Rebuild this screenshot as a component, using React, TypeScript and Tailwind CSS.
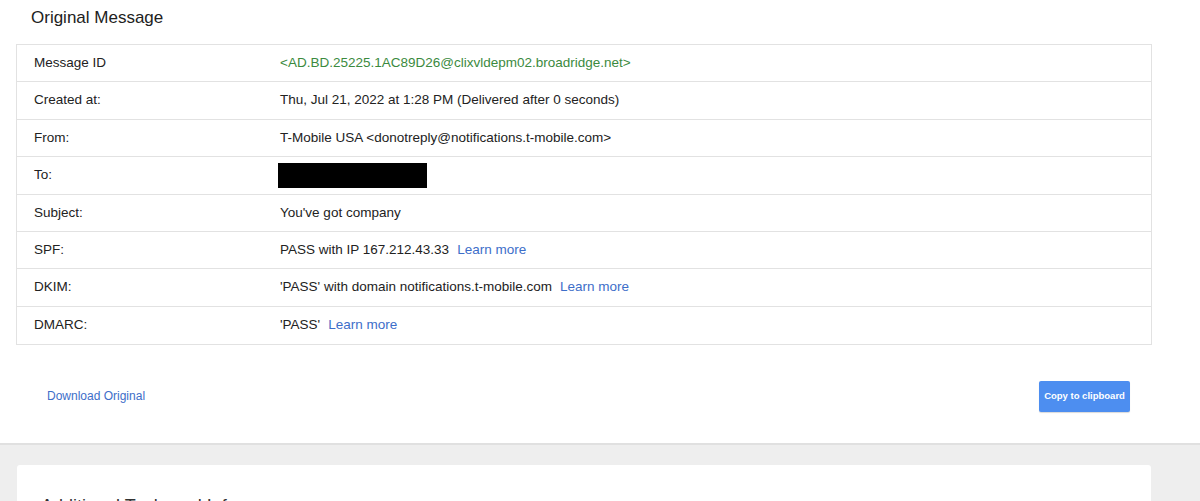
import React from 'react'

const link = 'text-[#3d6ec9]'

type Row = { label: string; value: React.ReactNode }

const rows: Row[] = [
  {
    label: 'Message ID',
    value: <span className="text-[#3b8a3e]">&lt;AD.BD.25225.1AC89D26@clixvldepm02.broadridge.net&gt;</span>,
  },
  { label: 'Created at:', value: 'Thu, Jul 21, 2022 at 1:28 PM (Delivered after 0 seconds)' },
  { label: 'From:', value: 'T-Mobile USA <donotreply@notifications.t-mobile.com>' },
  { label: 'To:', value: <span className="block w-[149px] h-[25px] bg-black -ml-[2px]" /> },
  { label: 'Subject:', value: "You've got company" },
  {
    label: 'SPF:',
    value: (
      <>
        PASS with IP 167.212.43.33 <span className={`${link} ml-[8px]`}>Learn more</span>
      </>
    ),
  },
  {
    label: 'DKIM:',
    value: (
      <>
        'PASS' with domain notifications.t-mobile.com <span className={`${link} ml-[8px]`}>Learn more</span>
      </>
    ),
  },
  {
    label: 'DMARC:',
    value: (
      <>
        'PASS' <span className={`${link} ml-[8px]`}>Learn more</span>
      </>
    ),
  },
]

export default function App() {
  return (
    <div className="w-[1200px] h-[501px] overflow-hidden bg-white text-[#222] font-['Liberation_Sans',Arial,sans-serif]">
      <div className="pl-[16px] pr-[48px]">
        <h1 className="text-[17px] leading-[22px] pt-[7px] pl-[15px] h-[44px] text-[#212121]">Original Message</h1>
        <div className="border border-[#e2e2e2]">
          {rows.map((r, i) => (
            <div
              key={r.label}
              className={`flex items-center h-[37.4px] text-[13.5px] ${i < rows.length - 1 ? 'border-b border-[#e2e2e2]' : ''}`}
            >
              <div className="w-[263px] pl-[17px] shrink-0">{r.label}</div>
              <div className="flex items-center">{r.value}</div>
            </div>
          ))}
        </div>
        <div className="flex items-center justify-between h-[98px] pl-[31px] pr-[22px]">
          <a className={`${link} text-[12px] mt-[4px]`}>Download Original</a>
          <button className="w-[91px] h-[31px] mt-[4px] rounded-[2px] bg-[#4d8ef0] text-white text-[9.5px] font-bold shadow-[0_1px_1px_rgba(0,0,0,0.15)]">
            Copy to clipboard
          </button>
        </div>
      </div>
      <div className="border-t-2 border-[#e0e0e0] bg-[#eeeeee] pt-[20px] px-[17px] h-[120px]">
        <div className="bg-white rounded-[3px] w-[1134px] h-[100px] pt-[30px] pl-[24px]">
          <div className="text-[18px] leading-[22px] text-[#333]">Additional Tools and Info</div>
        </div>
      </div>
    </div>
  )
}
